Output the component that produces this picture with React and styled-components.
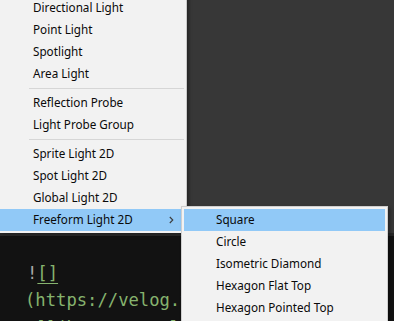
import React from "react";
import styled, { createGlobalStyle } from "styled-components";

const GlobalStyle = createGlobalStyle`
  html, body { margin: 0; padding: 0; background: #121212; }
  #root { width: 394px; height: 321px; }
`;

const Page = styled.div`
  position: relative;
  width: 394px;
  height: 321px;
  overflow: hidden;
  display: flex;
  flex-direction: column;
  background: #121212;
`;

const TopPanel = styled.div`
  height: 233px;
  flex: none;
  background: #373737;
  border-bottom: 3px solid #272727;
`;

const Editor = styled.div`
  flex: 1;
  padding: 23.5px 0 0 25px;
  font-family: "DejaVu Sans Mono", "Liberation Mono", monospace;
  font-size: 17.2px;
  line-height: 27.5px;
  color: #86b36e;
  white-space: pre;
`;

const CodeLine = styled.div``;

const Bang = styled.span`
  color: #a9a9a9;
  padding-left: 2px;
`;

const Link = styled.span`
  color: #86b36e;
  text-decoration: underline;
  text-decoration-color: #86b36e;
  text-underline-offset: 4px;
`;

const Menu = styled.div`
  position: absolute;
  background: #f2f2f2;
  font-family: "Noto Sans", "Open Sans", sans-serif;
  font-size: 11.7px;
  color: #0a0a0a;
  box-sizing: border-box;
`;

const MainMenu = styled(Menu)`
  left: 0;
  top: -3px;
  width: 186px;
  padding: 0 5px 2px 0;
  box-shadow: 1px 0 0 #c9c9c9, 3px 0 3px rgba(0, 0, 0, 0.35);
`;

const SubMenu = styled(Menu)`
  left: 181px;
  top: 206px;
  width: 207px;
  padding: 2px;
  border: 1px solid #cfcfcf;
  box-shadow: 2px 2px 3px rgba(0, 0, 0, 0.35);
`;

const Item = styled.div`
  display: flex;
  align-items: center;
  justify-content: space-between;
  height: 22px;
  line-height: 20px;
  padding: 0 7px 2px ${(p) => p.$indent}px;
  box-sizing: border-box;
  background: ${(p) => (p.$active ? "#91c9f7" : "transparent")};
  white-space: nowrap;
`;

const Separator = styled.div`
  height: 7px;
  display: flex;
  align-items: flex-start;
  padding: 3px 0 0 29px;
  box-sizing: border-box;
  margin-right: -3px;
  &::after {
    content: "";
    display: block;
    flex: 1;
    height: 1px;
    background: #d6d6d6;
  }
`;

const Chevron = () => (
  <svg width="5" height="8" viewBox="0 0 5 8" style={{ marginTop: 2 }}>
    <path d="M0.8 1 L3.8 4 L0.8 7" fill="none" stroke="#3c3c3c" strokeWidth="1.1" />
  </svg>
);

const mainGroups = [
  ["Directional Light", "Point Light", "Spotlight", "Area Light"],
  ["Reflection Probe", "Light Probe Group"],
  ["Sprite Light 2D", "Spot Light 2D", "Global Light 2D", "Freeform Light 2D"],
];

const subItems = [
  "Square",
  "Circle",
  "Isometric Diamond",
  "Hexagon Flat Top",
  "Hexagon Pointed Top",
];

export default function App() {
  return (
    <>
      <GlobalStyle />
      <Page>
        <TopPanel />
        <Editor>
          <CodeLine>
            <Bang>!</Bang>
            <Link>[]</Link>
          </CodeLine>
          <CodeLine>(https://velog.velcdn.com/images/</CodeLine>
          <CodeLine>![](https://velog.velcdn.com/</CodeLine>
        </Editor>

        <MainMenu>
          {mainGroups.map((group, gi) => (
            <React.Fragment key={gi}>
              {gi > 0 && <Separator />}
              {group.map((label) => {
                const active = label === "Freeform Light 2D";
                return (
                  <Item key={label} $indent={33} $active={active}>
                    <span>{label}</span>
                    {active && <Chevron />}
                  </Item>
                );
              })}
            </React.Fragment>
          ))}
        </MainMenu>

        <SubMenu>
          {subItems.map((label, i) => (
            <Item key={label} $indent={32} $active={i === 0}>
              <span>{label}</span>
            </Item>
          ))}
        </SubMenu>
      </Page>
    </>
  );
}
